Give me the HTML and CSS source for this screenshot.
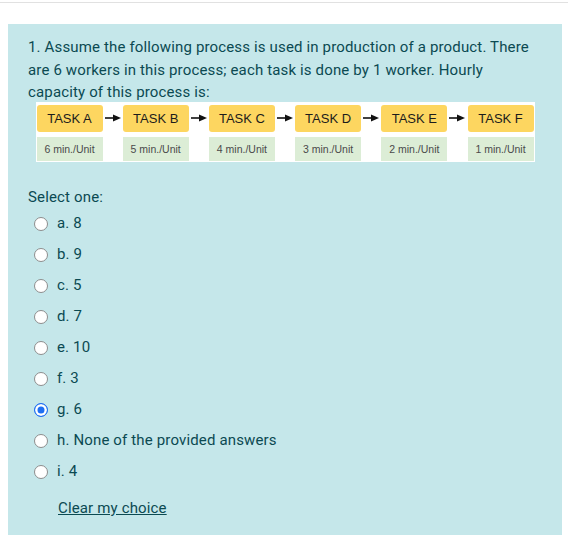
FILE: index.html
```html
<!DOCTYPE html>
<html>
<head>
<meta charset="utf-8">
<link rel="stylesheet" href="styles.css">
</head>
<body>
<div class="topline"></div>
<div class="formulation">
  <p class="qtext">1. Assume the following process is used in production of a product. There are 6 workers in this process; each task is done by 1 worker. Hourly capacity of this process is:</p>
  <div class="diagram">
    <div class="col"><div class="task">TASK A</div><div class="time">6 min./Unit</div></div>
    <div class="arrow"><svg width="20" height="10" viewBox="0 0 20 10"><line x1="2" y1="5" x2="12" y2="5" stroke="#111" stroke-width="1.6"/><path d="M10 1.5 L18 5 L10 8.5 Z" fill="#111"/></svg></div>
    <div class="col"><div class="task">TASK B</div><div class="time">5 min./Unit</div></div>
    <div class="arrow"><svg width="20" height="10" viewBox="0 0 20 10"><line x1="2" y1="5" x2="12" y2="5" stroke="#111" stroke-width="1.6"/><path d="M10 1.5 L18 5 L10 8.5 Z" fill="#111"/></svg></div>
    <div class="col"><div class="task">TASK C</div><div class="time">4 min./Unit</div></div>
    <div class="arrow"><svg width="20" height="10" viewBox="0 0 20 10"><line x1="2" y1="5" x2="12" y2="5" stroke="#111" stroke-width="1.6"/><path d="M10 1.5 L18 5 L10 8.5 Z" fill="#111"/></svg></div>
    <div class="col"><div class="task">TASK D</div><div class="time">3 min./Unit</div></div>
    <div class="arrow"><svg width="20" height="10" viewBox="0 0 20 10"><line x1="2" y1="5" x2="12" y2="5" stroke="#111" stroke-width="1.6"/><path d="M10 1.5 L18 5 L10 8.5 Z" fill="#111"/></svg></div>
    <div class="col"><div class="task">TASK E</div><div class="time">2 min./Unit</div></div>
    <div class="arrow"><svg width="20" height="10" viewBox="0 0 20 10"><line x1="2" y1="5" x2="12" y2="5" stroke="#111" stroke-width="1.6"/><path d="M10 1.5 L18 5 L10 8.5 Z" fill="#111"/></svg></div>
    <div class="col"><div class="task">TASK F</div><div class="time">1 min./Unit</div></div>
  </div>
  <div class="prompt">Select one:</div>
  <div class="answers">
    <label class="opt"><input type="radio" name="q"><span>a. 8</span></label>
    <label class="opt"><input type="radio" name="q"><span>b. 9</span></label>
    <label class="opt"><input type="radio" name="q"><span>c. 5</span></label>
    <label class="opt"><input type="radio" name="q"><span>d. 7</span></label>
    <label class="opt"><input type="radio" name="q"><span>e. 10</span></label>
    <label class="opt"><input type="radio" name="q"><span>f. 3</span></label>
    <label class="opt"><input type="radio" name="q" checked><span>g. 6</span></label>
    <label class="opt"><input type="radio" name="q"><span>h. None of the provided answers</span></label>
    <label class="opt"><input type="radio" name="q"><span>i. 4</span></label>
  </div>
  <div class="clear"><a href="#">Clear my choice</a></div>
</div>
</body>
</html>
```

FILE: styles.css
```css
html, body {
  margin: 0;
  padding: 0;
  background: #fff;
}
body {
  font-family: "Roboto", "Inter", sans-serif;
  font-size: 15px;
  letter-spacing: 0.15px;
  line-height: 22.5px;
  color: #0b4a52;
}
.topline {
  margin-top: 2px;
  height: 1px;
  background: #e1e1e1;
}
.formulation {
  margin: 21px 6px 0 8px;
  background: #c5e7ea;
  padding: 12px 20px 15px 20px;
}
.qtext {
  margin: 0;
}
.diagram {
  width: 497px;
  margin: -2px auto 0;
  background: #fff;
  padding: 3px 1px 1px 1px;
  display: flex;
  font-family: "Liberation Sans", Arial, sans-serif;
  letter-spacing: 0;
}
.col {
  width: 66px;
  display: flex;
  flex-direction: column;
  gap: 5px;
}
.task {
  height: 27px;
  background: #fdd660;
  border-radius: 3px;
  color: #1c1c1c;
  font-size: 13px;
  line-height: 27px;
  text-align: center;
}
.time {
  height: 24px;
  background: #dcedd6;
  color: #4a4a4a;
  font-size: 10.5px;
  line-height: 24px;
  text-align: center;
}
.arrow {
  flex: 1;
  height: 27px;
  display: flex;
  align-items: center;
  justify-content: center;
}
.arrow svg {
  display: block;
}
.prompt {
  margin-top: 24px;
}
.answers {
  display: flex;
  flex-direction: column;
}
.opt {
  height: 31px;
  display: flex;
  align-items: center;
  padding-left: 6px;
}
.opt input {
  appearance: none;
  -webkit-appearance: none;
  margin: 0 9px 0 0;
  width: 14px;
  height: 14px;
  border-radius: 50%;
  border: 1px solid #8d8d8d;
  background: #fff;
  box-sizing: border-box;
}
.opt input:checked {
  border: 1px solid #1f6ff2;
  background: #1f6ff2;
  box-shadow: inset 0 0 0 2.5px #fff;
}
.clear {
  margin-top: 10px;
  padding-left: 30px;
}
.clear a {
  color: #0b4a52;
  text-decoration: underline;
}
```
